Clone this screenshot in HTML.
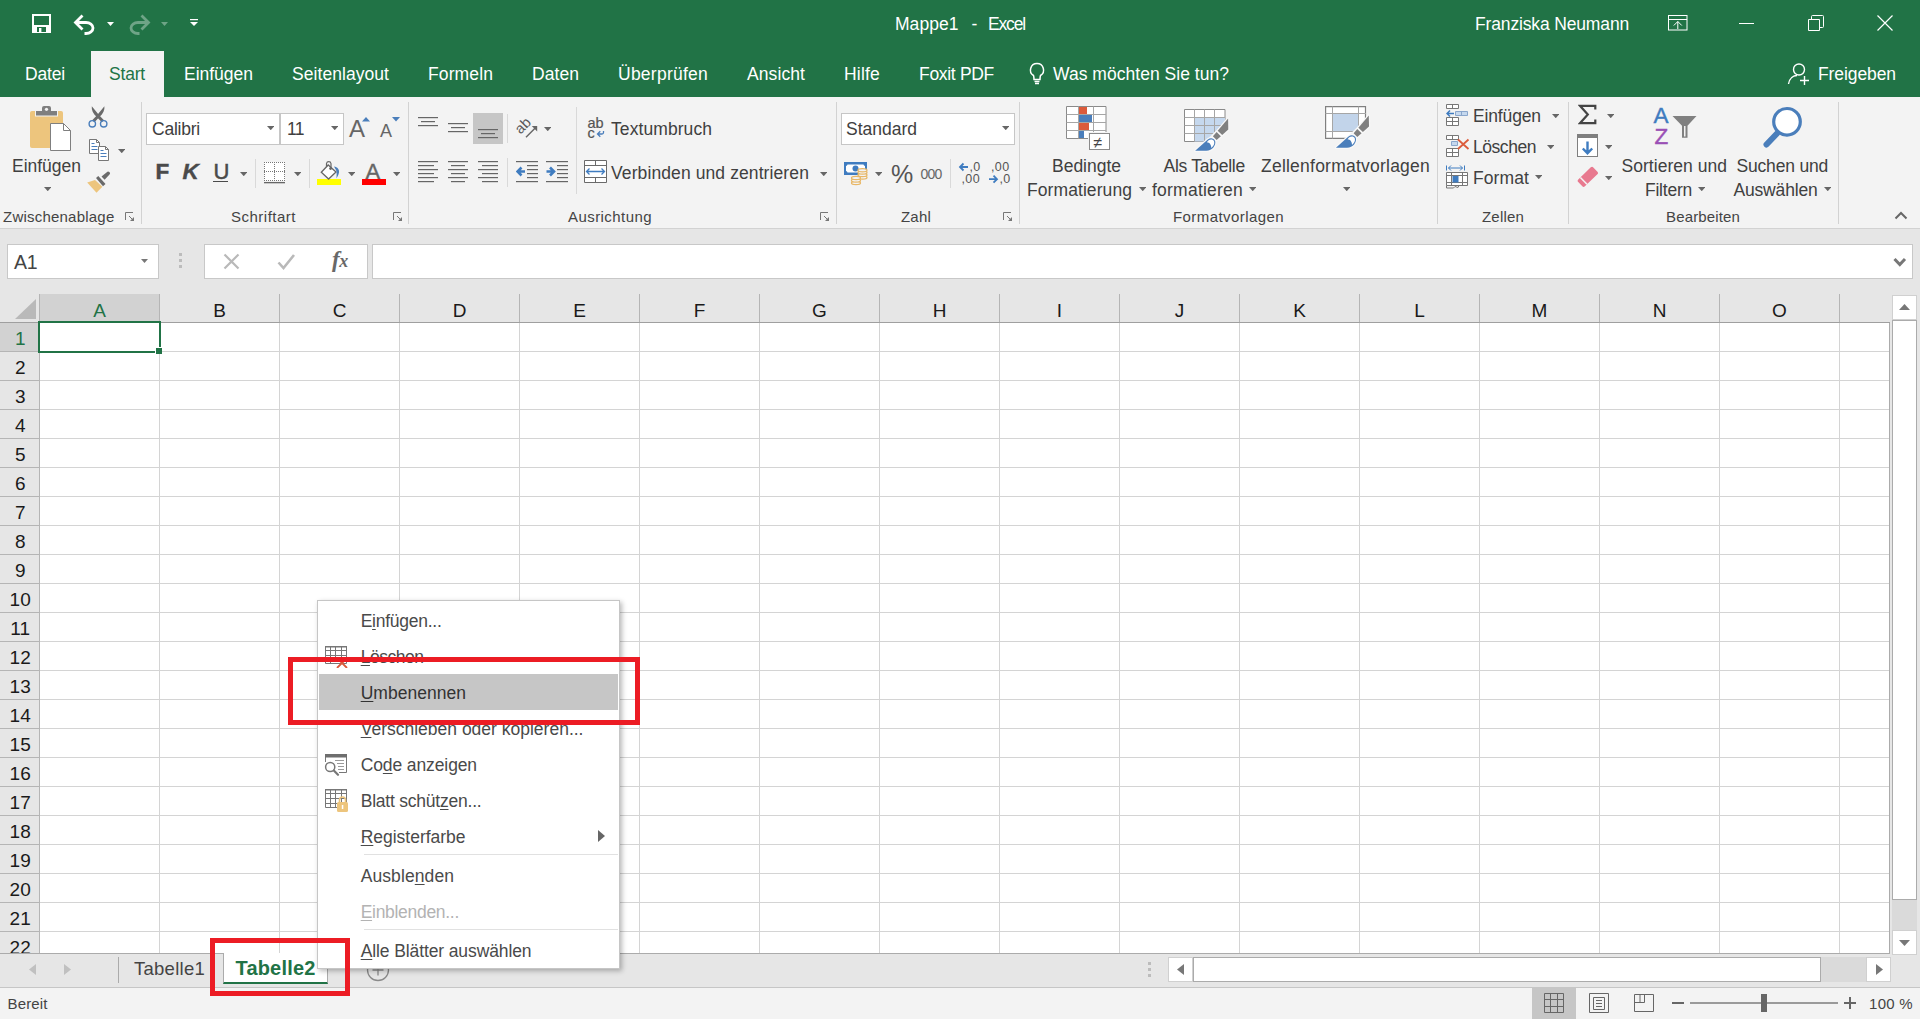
<!DOCTYPE html>
<html lang="de"><head><meta charset="utf-8"><title>Mappe1 - Excel</title>
<style>
*{box-sizing:border-box;margin:0;padding:0}
html,body{width:1920px;height:1019px;overflow:hidden;background:#e6e6e6;font-family:"Liberation Sans",sans-serif;}
.a{position:absolute;display:block}
.t{position:absolute;white-space:pre;}
#root{position:relative;width:1920px;height:1019px;overflow:hidden}
u{text-decoration:underline;text-underline-offset:1.5px;text-decoration-thickness:1px}
</style></head>
<body><div id="root">
<div class="a " style="left:0px;top:0px;width:1920px;height:97px;background:#217346;"></div>
<svg class="a" style="left:32px;top:14px;" width="19" height="19" viewBox="0 0 19 19"><path d="M1 1H18V18H1Z" fill="none" stroke="#fff" stroke-width="2"/><rect x="2" y="2" width="15" height="8" fill="none"/><path d="M2 11H17V17H2Z" fill="#fff"/><rect x="5" y="13" width="9" height="5" fill="#217346"/><rect x="7" y="14" width="2.4" height="4" fill="#fff"/></svg>
<svg class="a" style="left:73px;top:14px;" width="24" height="21" viewBox="0 0 24 21"><path d="M2.5 8.5H13A7 5.5 0 0 1 13 19.5H11.5" fill="none" stroke="#fff" stroke-width="2.800"/><path d="M9.5 1.5L2.5 8.5L9.5 15.5" fill="none" stroke="#fff" stroke-width="2.800"/></svg>
<svg class="a" style="left:107.0px;top:21.5px;" width="7" height="4" viewBox="0 0 7 4"><path d="M0 0H7L3.5 4Z" fill="#fff"/></svg>
<svg class="a" style="left:127px;top:14px;" width="24" height="21" viewBox="0 0 24 21"><g opacity="0.35"><path d="M21.5 8.5H11A7 5.5 0 0 0 11 19.5H12.5" fill="none" stroke="#fff" stroke-width="2.800"/><path d="M14.5 1.5L21.5 8.5L14.5 15.5" fill="none" stroke="#fff" stroke-width="2.800"/></g></svg>
<svg class="a" style="left:161.0px;top:21.5px;" width="7" height="4" viewBox="0 0 7 4"><path d="M0 0H7L3.5 4Z" fill="rgba(255,255,255,.35)"/></svg>
<svg class="a" style="left:190px;top:19px;" width="8" height="8" viewBox="0 0 8 8"><rect x="0" y="0" width="8" height="1.2" fill="#fff"/><path d="M0 3H8L4 7Z" fill="#fff"/></svg>
<div class="t " style="left:895px;top:11.9px;height:24px;line-height:24px;font-size:17.5px;color:#fff;letter-spacing:0.04px;">Mappe1</div>
<div class="t " style="left:971.5px;top:11.9px;height:24px;line-height:24px;font-size:17.5px;color:#fff;letter-spacing:-0.83px;">-</div>
<div class="t " style="left:988px;top:11.9px;height:24px;line-height:24px;font-size:17.5px;color:#fff;letter-spacing:-1.16px;">Excel</div>
<div class="t " style="left:1475px;top:11.9px;height:24px;line-height:24px;font-size:17.5px;color:#fff;letter-spacing:-0.15px;">Franziska Neumann</div>
<svg class="a" style="left:1668px;top:15px;" width="20" height="16" viewBox="0 0 20 16"><rect x="0.5" y="0.5" width="18.500" height="14.500" fill="none" stroke="#fff"/><path d="M0.5 4.5H19" stroke="#fff"/><path d="M9.800 14V6.500M5.800 10.500L9.800 6.500L13.800 10.500" fill="none" stroke="#fff"/></svg>
<div class="a " style="left:1739px;top:23px;width:15px;height:1px;background:#fff;"></div>
<svg class="a" style="left:1808px;top:15px;" width="16" height="16" viewBox="0 0 16 16"><path d="M0.5 4.5H11.500V15.500H0.5Z" fill="none" stroke="#fff"/><path d="M3.500 4.500V1.500A1 1 0 0 1 4.500 0.500H14.500A1 1 0 0 1 15.500 1.500V11.500A1 1 0 0 1 14.500 12.500H11.500" fill="none" stroke="#fff"/></svg>
<svg class="a" style="left:1877px;top:15px;" width="16" height="16" viewBox="0 0 16 16"><path d="M0.5 0.5L15.500 15.500M15.500 0.5L0.5 15.500" stroke="#fff" stroke-width="1.200"/></svg>
<div class="a " style="left:91px;top:51px;width:73px;height:46px;background:#f3f3f3;"></div>
<div class="t " style="left:25px;top:62.3px;height:24px;line-height:24px;font-size:17.5px;color:#fff;letter-spacing:-0.17px;">Datei</div>
<div class="t " style="left:109px;top:62.3px;height:24px;line-height:24px;font-size:17.5px;color:#217346;letter-spacing:-0.19px;">Start</div>
<div class="t " style="left:184px;top:62.3px;height:24px;line-height:24px;font-size:17.5px;color:#fff;letter-spacing:-0.01px;">Einfügen</div>
<div class="t " style="left:292px;top:62.3px;height:24px;line-height:24px;font-size:17.5px;color:#fff;letter-spacing:0.06px;">Seitenlayout</div>
<div class="t " style="left:428px;top:62.3px;height:24px;line-height:24px;font-size:17.5px;color:#fff;letter-spacing:0.12px;">Formeln</div>
<div class="t " style="left:532px;top:62.3px;height:24px;line-height:24px;font-size:17.5px;color:#fff;letter-spacing:0.06px;">Daten</div>
<div class="t " style="left:618px;top:62.3px;height:24px;line-height:24px;font-size:17.5px;color:#fff;letter-spacing:0.25px;">Überprüfen</div>
<div class="t " style="left:747px;top:62.3px;height:24px;line-height:24px;font-size:17.5px;color:#fff;letter-spacing:0.09px;">Ansicht</div>
<div class="t " style="left:844px;top:62.3px;height:24px;line-height:24px;font-size:17.5px;color:#fff;letter-spacing:0.20px;">Hilfe</div>
<div class="t " style="left:919px;top:62.3px;height:24px;line-height:24px;font-size:17.5px;color:#fff;letter-spacing:-0.31px;">Foxit PDF</div>
<div class="t " style="left:1053px;top:62.3px;height:24px;line-height:24px;font-size:17.5px;color:#fff;letter-spacing:0.03px;">Was möchten Sie tun?</div>
<div class="t " style="left:1818px;top:62.3px;height:24px;line-height:24px;font-size:17.5px;color:#fff;letter-spacing:-0.09px;">Freigeben</div>
<svg class="a" style="left:1028px;top:62px;" width="18" height="24" viewBox="0 0 18 24"><path d="M9 1.5A6.5 6.5 0 0 0 5.5 13.5C6 15 6 16 6 17.5H12C12 16 12 15 12.5 13.5A6.5 6.5 0 0 0 9 1.5Z" fill="none" stroke="#fff" stroke-width="1.5"/><path d="M6.5 19.5H11.5M7 21.5H11" stroke="#fff" stroke-width="1.3"/></svg>
<svg class="a" style="left:1787px;top:62px;" width="24" height="24" viewBox="0 0 24 24"><circle cx="12" cy="7.5" r="5.5" fill="none" stroke="#fff" stroke-width="1.4"/><path d="M1.5 22C2.5 16 6.5 13.5 10 13.5" fill="none" stroke="#fff" stroke-width="1.4"/><path d="M17.5 14V23M13 18.5H22" stroke="#fff" stroke-width="1.4"/></svg>
<div class="a " style="left:0px;top:97px;width:1920px;height:132px;background:#f3f3f3;border-bottom:1px solid #d2d2d2;"></div>
<div class="a " style="left:141px;top:102px;width:1px;height:122px;background:#d2d2d2;"></div>
<div class="a " style="left:408px;top:102px;width:1px;height:122px;background:#d2d2d2;"></div>
<div class="a " style="left:836px;top:102px;width:1px;height:122px;background:#d2d2d2;"></div>
<div class="a " style="left:1019px;top:102px;width:1px;height:122px;background:#d2d2d2;"></div>
<div class="a " style="left:1437px;top:102px;width:1px;height:122px;background:#d2d2d2;"></div>
<div class="a " style="left:1568px;top:102px;width:1px;height:122px;background:#d2d2d2;"></div>
<div class="a " style="left:1838px;top:102px;width:1px;height:122px;background:#d2d2d2;"></div>
<div class="t " style="left:3px;top:204.7px;height:24px;line-height:24px;font-size:15px;color:#444;letter-spacing:0.22px;">Zwischenablage</div>
<div class="t " style="left:231px;top:204.7px;height:24px;line-height:24px;font-size:15px;color:#444;letter-spacing:0.50px;">Schriftart</div>
<div class="t " style="left:568px;top:204.7px;height:24px;line-height:24px;font-size:15px;color:#444;letter-spacing:0.44px;">Ausrichtung</div>
<div class="t " style="left:901px;top:204.7px;height:24px;line-height:24px;font-size:15px;color:#444;letter-spacing:0.21px;">Zahl</div>
<div class="t " style="left:1173px;top:204.7px;height:24px;line-height:24px;font-size:15px;color:#444;letter-spacing:0.43px;">Formatvorlagen</div>
<div class="t " style="left:1482px;top:204.7px;height:24px;line-height:24px;font-size:15px;color:#444;letter-spacing:0.19px;">Zellen</div>
<div class="t " style="left:1666px;top:204.7px;height:24px;line-height:24px;font-size:15px;color:#444;letter-spacing:0.15px;">Bearbeiten</div>
<svg class="a" style="left:125px;top:212px;" width="10" height="10" viewBox="0 0 10 10"><path d="M0.500 8V0.500H8" fill="none" stroke="#777"/><path d="M4 4L8 8" fill="none" stroke="#777"/><path d="M9 5V9H5Z" fill="#777"/></svg>
<svg class="a" style="left:393px;top:212px;" width="10" height="10" viewBox="0 0 10 10"><path d="M0.500 8V0.500H8" fill="none" stroke="#777"/><path d="M4 4L8 8" fill="none" stroke="#777"/><path d="M9 5V9H5Z" fill="#777"/></svg>
<svg class="a" style="left:820px;top:212px;" width="10" height="10" viewBox="0 0 10 10"><path d="M0.500 8V0.500H8" fill="none" stroke="#777"/><path d="M4 4L8 8" fill="none" stroke="#777"/><path d="M9 5V9H5Z" fill="#777"/></svg>
<svg class="a" style="left:1003px;top:212px;" width="10" height="10" viewBox="0 0 10 10"><path d="M0.500 8V0.500H8" fill="none" stroke="#777"/><path d="M4 4L8 8" fill="none" stroke="#777"/><path d="M9 5V9H5Z" fill="#777"/></svg>
<svg class="a" style="left:1894px;top:211px;" width="14" height="9" viewBox="0 0 14 9"><path d="M1.500 7.500L7 2L12.500 7.500" fill="none" stroke="#666" stroke-width="2"/></svg>
<svg class="a" style="left:29px;top:105px;" width="44" height="47" viewBox="0 0 44 47"><rect x="1" y="6" width="33" height="37" rx="2" fill="#edc57d"/>
<path d="M6 5H12V0.5H23V5H29V11.500H6Z" fill="#f3f3f3"/>
<path d="M7 6H13V3A2 2 0 0 1 15 1H20A2 2 0 0 1 22 3V6H28V10.500H7Z" fill="#7f7f7f"/><circle cx="17.500" cy="4.300" r="1.600" fill="#f3f3f3"/>
<path d="M21.500 18.500H34.500L41.500 25.500V45.500H21.500Z" fill="#fff" stroke="#7f7f7f"/><path d="M34.500 18.500V25.500H41.500" fill="none" stroke="#7f7f7f"/></svg>
<div class="t " style="left:12px;top:153.7px;height:24px;line-height:24px;font-size:17.5px;color:#404040;letter-spacing:-0.01px;">Einfügen</div>
<svg class="a" style="left:43.75px;top:186.9px;" width="7.5" height="4.2" viewBox="0 0 7.5 4.2"><path d="M0 0H7.5L3.75 4.2Z" fill="#666"/></svg>
<svg class="a" style="left:87px;top:105px;" width="23" height="24" viewBox="0 0 23 24"><path d="M4.800 1.200L8.500 5.800L12.200 10.300L17 15.200L14.800 17.200L9.800 12C6 8.500 4.300 5 4.800 1.200Z" fill="#6a6a6a"/><path d="M17.400 1.200L13.700 5.800L10 10.300L5.200 15.200L7.400 17.200L12.400 12C16.200 8.500 17.900 5 17.400 1.200Z" fill="#6a6a6a"/>
<circle cx="5.300" cy="18.800" r="3.200" fill="none" stroke="#4a7ebb" stroke-width="1.400"/><circle cx="16.700" cy="18.800" r="3.200" fill="none" stroke="#4a7ebb" stroke-width="1.400"/></svg>
<svg class="a" style="left:88px;top:138px;" width="23" height="24" viewBox="0 0 23 24"><path d="M1.500 1.500H8.500L11.500 4.500V15.500H1.500Z" fill="#fff" stroke="#777"/><path d="M8.500 1.500V4.500H11.500" fill="none" stroke="#777"/><path d="M3.500 5.500H6.500M3.500 8.500H9.500M3.500 11.500H9.500" stroke="#4a7ebb"/>
<path d="M10.500 8.500H17.500L20.500 11.500V22.500H10.500Z" fill="#fff" stroke="#777"/><path d="M17.500 8.500V11.500H20.500" fill="none" stroke="#777"/><path d="M12.500 12.500H15.500M12.500 15.500H18.500M12.500 18.500H18.500" stroke="#4a7ebb"/></svg>
<svg class="a" style="left:117.75px;top:148.9px;" width="7.5" height="4.2" viewBox="0 0 7.5 4.2"><path d="M0 0H7.5L3.75 4.2Z" fill="#666"/></svg>
<svg class="a" style="left:86px;top:171px;" width="26" height="24" viewBox="0 0 26 24"><path d="M1.200 11.400L9 9L16.400 15.800L10.500 21.700Z" fill="#edc57d"/><path d="M10 7L12.300 5L19.500 13L17 15.300Z" fill="#6a6a6a"/><path d="M15.500 5.500L20.800 1.200A1.800 1.800 0 0 1 23.500 3.600L18.600 8.800Z" fill="#6a6a6a"/></svg>
<div class="a " style="left:146px;top:113px;width:134px;height:32px;background:#fff;border:1px solid #c6c6c6;"></div>
<div class="a " style="left:280px;top:113px;width:64px;height:32px;background:#fff;border:1px solid #c6c6c6;"></div>
<div class="t " style="left:152px;top:116.7px;height:24px;line-height:24px;font-size:17.5px;color:#404040;letter-spacing:-0.23px;">Calibri</div>
<div class="t " style="left:287px;top:116.7px;height:24px;line-height:24px;font-size:17.5px;color:#404040;letter-spacing:-0.58px;">11</div>
<svg class="a" style="left:266.75px;top:125.9px;" width="7.5" height="4.2" viewBox="0 0 7.5 4.2"><path d="M0 0H7.5L3.75 4.2Z" fill="#666"/></svg>
<svg class="a" style="left:330.75px;top:125.9px;" width="7.5" height="4.2" viewBox="0 0 7.5 4.2"><path d="M0 0H7.5L3.75 4.2Z" fill="#666"/></svg>
<div class="t " style="left:349px;top:116.7px;height:24px;line-height:24px;font-size:24px;color:#666;">A</div>
<svg class="a" style="left:362px;top:117px;" width="8" height="5" viewBox="0 0 8 5"><path d="M0 4.500L4 0L8 4.500Z" fill="#4a7ebb"/></svg>
<div class="t " style="left:380px;top:119.2px;height:24px;line-height:24px;font-size:18px;color:#666;letter-spacing:0.99px;">A</div>
<svg class="a" style="left:392px;top:117px;" width="8" height="5" viewBox="0 0 8 5"><path d="M0 0H8L4 4.500Z" fill="#4a7ebb"/></svg>
<div class="t " style="left:155.5px;top:159.9px;height:24px;line-height:24px;font-size:22.5px;color:#4a4a4a;letter-spacing:-2.24px;font-weight:bold;-webkit-text-stroke:0.5px #4a4a4a;">F</div>
<div class="t " style="left:182.5px;top:159.9px;height:24px;line-height:24px;font-size:22.5px;color:#4a4a4a;letter-spacing:0.75px;font-weight:bold;font-style:italic;-webkit-text-stroke:0.4px #4a4a4a;">K</div>
<div class="t " style="left:213.5px;top:159.9px;height:24px;line-height:24px;font-size:22px;color:#4a4a4a;letter-spacing:-1.39px;-webkit-text-stroke:0.5px #4a4a4a;">U</div>
<div class="a " style="left:213px;top:181px;width:15px;height:1px;background:#4a4a4a;"></div>
<svg class="a" style="left:239.75px;top:171.9px;" width="7.5" height="4.2" viewBox="0 0 7.5 4.2"><path d="M0 0H7.5L3.75 4.2Z" fill="#666"/></svg>
<div class="a " style="left:255px;top:159px;width:1px;height:29px;background:#d9d9d9;"></div>
<svg class="a" style="left:263px;top:161px;" width="23" height="23" viewBox="0 0 23 23"><rect x="1" y="1" width="21" height="20" fill="#fff"/><path d="M1.500 1V21M11.500 1V21M21.500 1V21M1 1.500H22M1 10.500H22M1 19.500H22" stroke="#777" stroke-dasharray="1 1" fill="none"/><path d="M1 21.600H22" stroke="#666" stroke-width="1.400"/></svg>
<svg class="a" style="left:293.75px;top:171.9px;" width="7.5" height="4.2" viewBox="0 0 7.5 4.2"><path d="M0 0H7.5L3.75 4.2Z" fill="#666"/></svg>
<div class="a " style="left:309px;top:159px;width:1px;height:29px;background:#d9d9d9;"></div>
<svg class="a" style="left:317px;top:160px;" width="25" height="26" viewBox="0 0 25 26"><rect x="0" y="19" width="24" height="6" fill="#ffff00"/>
<path d="M4.300 12.300L11.200 5L19 12L11.600 19Z" fill="#fff" stroke="#666" stroke-width="1.300"/><path d="M9.500 7V3.500A2.300 2.300 0 0 1 14 3.500V8" fill="none" stroke="#666" stroke-width="1.200"/><circle cx="13.600" cy="8.600" r="1.400" fill="#666"/>
<path d="M17 6.500C20.500 7 22.500 9.500 22 12.500C21.500 15 20.500 16.500 19.500 18.500C19.500 15 20 12 19 10Z" fill="#4a7ebb"/></svg>
<svg class="a" style="left:347.75px;top:171.9px;" width="7.5" height="4.2" viewBox="0 0 7.5 4.2"><path d="M0 0H7.5L3.75 4.2Z" fill="#666"/></svg>
<div class="t " style="left:365.5px;top:160.0px;height:24px;line-height:24px;font-size:22px;color:#666;letter-spacing:1.33px;-webkit-text-stroke:0.4px #666;">A</div>
<div class="a " style="left:362px;top:179px;width:24px;height:6px;background:#ff0000;"></div>
<svg class="a" style="left:392.75px;top:171.9px;" width="7.5" height="4.2" viewBox="0 0 7.5 4.2"><path d="M0 0H7.5L3.75 4.2Z" fill="#666"/></svg>
<div class="a " style="left:473px;top:113px;width:30px;height:31px;background:#c6c6c6;"></div>
<svg class="a" style="left:418px;top:113px;" width="22" height="26" viewBox="0 0 22 26"><rect x="0" y="4" width="20" height="1.200" fill="#666"/><rect x="3" y="8" width="14" height="1.200" fill="#666"/><rect x="0" y="12" width="20" height="1.200" fill="#666"/></svg>
<svg class="a" style="left:448px;top:113px;" width="22" height="26" viewBox="0 0 22 26"><rect x="0" y="10" width="20" height="1.200" fill="#666"/><rect x="3" y="14" width="14" height="1.200" fill="#666"/><rect x="0" y="18" width="20" height="1.200" fill="#666"/></svg>
<svg class="a" style="left:478px;top:113px;" width="22" height="26" viewBox="0 0 22 26"><rect x="0" y="16" width="20" height="1.200" fill="#666"/><rect x="3" y="20" width="14" height="1.200" fill="#666"/><rect x="0" y="24" width="20" height="1.200" fill="#666"/></svg>
<div class="a " style="left:507px;top:114px;width:1px;height:29px;background:#d9d9d9;"></div>
<svg class="a" style="left:516px;top:116px;" width="24" height="24" viewBox="0 0 24 24"><text x="0" y="0" font-size="14.500" fill="#5a5a5a" transform="translate(4.600 18.800) rotate(-45)" font-family="Liberation Sans, sans-serif">ab</text><path d="M10 21.200L19.500 11.700" fill="none" stroke="#666" stroke-width="1.400"/><path d="M15.800 10H21.200V15.400Z" fill="#666"/></svg>
<svg class="a" style="left:543.75px;top:126.6px;" width="7.5" height="4.2" viewBox="0 0 7.5 4.2"><path d="M0 0H7.5L3.75 4.2Z" fill="#666"/></svg>
<div class="a " style="left:576px;top:107px;width:1px;height:87px;background:#d9d9d9;"></div>
<svg class="a" style="left:586px;top:115px;" width="22" height="26" viewBox="0 0 22 26"><text x="1.500" y="13.200" font-size="14.500" fill="#555" stroke="#555" stroke-width="0.200" font-family="Liberation Sans, sans-serif">ab</text><text x="1.500" y="23.300" font-size="14.500" fill="#555" stroke="#555" stroke-width="0.200" font-family="Liberation Sans, sans-serif">c</text><path d="M17.500 16V17.500A1.500 1.500 0 0 1 16 19H12M14.300 16.300L11.500 19L14.300 21.700" fill="none" stroke="#4a7ebb" stroke-width="1.300"/></svg>
<div class="t " style="left:611px;top:116.7px;height:24px;line-height:24px;font-size:17.5px;color:#404040;letter-spacing:0.08px;">Textumbruch</div>
<svg class="a" style="left:418px;top:160px;" width="22" height="26" viewBox="0 0 22 26"><rect x="0" y="1" width="20" height="1.200" fill="#666"/><rect x="0" y="5" width="16" height="1.200" fill="#666"/><rect x="0" y="9" width="20" height="1.200" fill="#666"/><rect x="0" y="13" width="16" height="1.200" fill="#666"/><rect x="0" y="17" width="20" height="1.200" fill="#666"/><rect x="0" y="21" width="16" height="1.200" fill="#666"/></svg>
<svg class="a" style="left:448px;top:160px;" width="22" height="26" viewBox="0 0 22 26"><rect x="0" y="1" width="20" height="1.200" fill="#666"/><rect x="3" y="5" width="14" height="1.200" fill="#666"/><rect x="0" y="9" width="20" height="1.200" fill="#666"/><rect x="3" y="13" width="14" height="1.200" fill="#666"/><rect x="0" y="17" width="20" height="1.200" fill="#666"/><rect x="3" y="21" width="14" height="1.200" fill="#666"/></svg>
<svg class="a" style="left:478px;top:160px;" width="22" height="26" viewBox="0 0 22 26"><rect x="0" y="1" width="20" height="1.200" fill="#666"/><rect x="4" y="5" width="16" height="1.200" fill="#666"/><rect x="0" y="9" width="20" height="1.200" fill="#666"/><rect x="4" y="13" width="16" height="1.200" fill="#666"/><rect x="0" y="17" width="20" height="1.200" fill="#666"/><rect x="4" y="21" width="16" height="1.200" fill="#666"/></svg>
<div class="a " style="left:507px;top:158px;width:1px;height:29px;background:#d9d9d9;"></div>
<svg class="a" style="left:516px;top:160px;" width="23" height="24" viewBox="0 0 23 24"><rect x="0" y="1" width="22" height="1.200" fill="#666"/><rect x="11" y="5" width="11" height="1.200" fill="#666"/><rect x="11" y="9" width="11" height="1.200" fill="#666"/><rect x="11" y="13" width="11" height="1.200" fill="#666"/><rect x="11" y="17" width="11" height="1.200" fill="#666"/><rect x="0" y="21" width="22" height="1.200" fill="#666"/><path d="M9 11.500H2.500M5.500 7.500L1.500 11.500L5.500 15.500" fill="none" stroke="#3f7cc0" stroke-width="2.600"/></svg>
<svg class="a" style="left:546px;top:160px;" width="23" height="24" viewBox="0 0 23 24"><rect x="0" y="1" width="22" height="1.200" fill="#666"/><rect x="11" y="5" width="11" height="1.200" fill="#666"/><rect x="11" y="9" width="11" height="1.200" fill="#666"/><rect x="11" y="13" width="11" height="1.200" fill="#666"/><rect x="11" y="17" width="11" height="1.200" fill="#666"/><rect x="0" y="21" width="22" height="1.200" fill="#666"/><path d="M0.500 11.500H7M4 7.500L8 11.500L4 15.500" fill="none" stroke="#3f7cc0" stroke-width="2.600"/></svg>
<svg class="a" style="left:584px;top:160px;" width="24" height="24" viewBox="0 0 24 24"><path d="M0.500 0.500H22.500V22.500H0.500Z" fill="#fff" stroke="#6a6a6a"/><path d="M0.500 5.500H22.500M0.500 17.500H22.500M11.500 0.500V5.500M11.500 17.500V22.500" fill="none" stroke="#6a6a6a"/><path d="M3 11.500H20M5.500 8.500L2.500 11.500L5.500 14.500M17.500 8.500L20.500 11.500L17.500 14.500" fill="none" stroke="#3f7cc0" stroke-width="1.300"/></svg>
<div class="t " style="left:611px;top:160.7px;height:24px;line-height:24px;font-size:17.5px;color:#404040;letter-spacing:0.10px;">Verbinden und zentrieren</div>
<svg class="a" style="left:819.75px;top:171.9px;" width="7.5" height="4.2" viewBox="0 0 7.5 4.2"><path d="M0 0H7.5L3.75 4.2Z" fill="#666"/></svg>
<div class="a " style="left:841px;top:113px;width:174px;height:32px;background:#fff;border:1px solid #c6c6c6;"></div>
<div class="t " style="left:846px;top:116.7px;height:24px;line-height:24px;font-size:17.5px;color:#404040;">Standard</div>
<svg class="a" style="left:1001.75px;top:125.9px;" width="7.5" height="4.2" viewBox="0 0 7.5 4.2"><path d="M0 0H7.5L3.75 4.2Z" fill="#666"/></svg>
<svg class="a" style="left:843px;top:161px;" width="26" height="25" viewBox="0 0 26 25"><rect x="1" y="1" width="23" height="13" fill="#3f7cc0"/><path d="M4.500 3.500H20.500A2 2 0 0 0 22 5V10A2 2 0 0 0 20.500 11.500H4.500A2 2 0 0 0 3 10V5A2 2 0 0 0 4.500 3.500Z" fill="#fff"/><circle cx="12.500" cy="7.500" r="3" fill="#3f7cc0"/>
<g fill="#f3f3f3" stroke="#e8b766" stroke-width="1.300"><ellipse cx="19.500" cy="16.500" rx="4.500" ry="1.600"/><ellipse cx="19.500" cy="14" rx="4.500" ry="1.600"/><ellipse cx="19.500" cy="11.500" rx="4.500" ry="1.600"/><ellipse cx="19.500" cy="9.300" rx="4.500" ry="1.600"/><ellipse cx="13" cy="22" rx="4.500" ry="1.600"/><ellipse cx="13" cy="19.500" rx="4.500" ry="1.600"/><ellipse cx="13" cy="17" rx="4.500" ry="1.600"/></g></svg>
<svg class="a" style="left:874.75px;top:171.6px;" width="7.5" height="4.2" viewBox="0 0 7.5 4.2"><path d="M0 0H7.5L3.75 4.2Z" fill="#666"/></svg>
<div class="t " style="left:891px;top:161.7px;height:24px;line-height:24px;font-size:25px;color:#555;letter-spacing:-2.23px;">%</div>
<div class="t " style="left:920.5px;top:161.7px;height:24px;line-height:24px;font-size:14px;color:#666;letter-spacing:-0.79px;">000</div>
<div class="a " style="left:950px;top:159px;width:1px;height:29px;background:#d9d9d9;"></div>
<svg class="a" style="left:957px;top:160px;" width="26" height="27" viewBox="0 0 26 27"><text x="12.500" y="11" font-size="12.500" fill="#555" font-family="Liberation Sans, sans-serif" letter-spacing="0.2">,0</text><text x="4.500" y="22.500" font-size="12.500" fill="#555" font-family="Liberation Sans, sans-serif" letter-spacing="0.4">,00</text><path d="M11 7H3.500M6.500 3.500L3 7L6.500 10.500" fill="none" stroke="#3f7cc0" stroke-width="1.800"/></svg>
<svg class="a" style="left:987px;top:160px;" width="26" height="27" viewBox="0 0 26 27"><text x="4" y="11" font-size="12.500" fill="#555" font-family="Liberation Sans, sans-serif" letter-spacing="0.4">,00</text><text x="12.500" y="22.500" font-size="12.500" fill="#555" font-family="Liberation Sans, sans-serif" letter-spacing="0.2">,0</text><path d="M2 19.200H9.500M6.500 15.700L10 19.200L6.500 22.700" fill="none" stroke="#3f7cc0" stroke-width="1.800"/></svg>
<svg class="a" style="left:1066px;top:106px;" width="46" height="46" viewBox="0 0 46 46"><path d="M0.500 0.500H40V32.500H0.500Z" fill="#fff" stroke="#8a8a8a"/><path d="M0.500 8.500H40M0.500 16.500H40M0.500 24.500H40M12.500 0.500V32.500M27.500 0.500V32.500" stroke="#a6a6a6" fill="none"/>
<rect x="13" y="1" width="8" height="7" fill="#dc5b3b"/><rect x="13" y="9" width="13" height="7" fill="#4a7ebb"/><rect x="13" y="17" width="10" height="7" fill="#dc5b3b"/><rect x="13" y="25" width="5" height="7" fill="#4a7ebb"/>
<rect x="22" y="26" width="23" height="19" fill="#f3f3f3"/><rect x="23.500" y="27.500" width="20" height="16" fill="#fff" stroke="#8a8a8a"/><text x="27.500" y="41.500" font-size="16" fill="#444" font-family="Liberation Sans, sans-serif">≠</text></svg>
<div class="t " style="left:1052px;top:153.7px;height:24px;line-height:24px;font-size:17.5px;color:#404040;letter-spacing:-0.01px;">Bedingte</div>
<div class="t " style="left:1027px;top:177.7px;height:24px;line-height:24px;font-size:17.5px;color:#404040;letter-spacing:0.08px;">Formatierung</div>
<svg class="a" style="left:1138.75px;top:186.9px;" width="7.5" height="4.2" viewBox="0 0 7.5 4.2"><path d="M0 0H7.5L3.75 4.2Z" fill="#666"/></svg>
<svg class="a" style="left:1184px;top:106px;" width="48" height="48" viewBox="0 0 48 48"><path d="M0.500 3.500H41V35.500H0.500Z" fill="#fff" stroke="#8a8a8a"/><rect x="10.500" y="11.500" width="30.500" height="24" fill="#c5d8ee"/><path d="M0.500 11.500H41M0.500 19.500H41M0.500 27.500H41M10.500 3.500V35.500M20.500 3.500V35.500M30.500 3.500V35.500" stroke="#a6a6a6" fill="none"/><g transform="translate(0.300 3)"><path d="M46 7.500V45H8Z" fill="#f3f3f3"/><g stroke="#f8f8f8" stroke-width="2.400" stroke-linejoin="round" fill="#f8f8f8"><path d="M43.800 9.600L44 20.500L37.900 26L33.400 21.800Z"/><path d="M32.300 23.100L36.600 27.300L32.300 31L28.600 27.300Z"/><path d="M10.900 41.800L23.500 30.500C26 28.300 29.500 28.800 30.800 32C32 36 28 41.800 22 41.800Z"/></g>
<path d="M43.800 9.600L44 20.500L37.900 26L33.400 21.800Z" fill="#808080"/><path d="M32.300 23.100L36.600 27.300L32.300 31L28.600 27.300Z" fill="#808080"/>
<path d="M10.900 41.800L23.500 30.500C26 28.300 29.500 28.800 30.800 32C32 36 28 41.800 22 41.800Z" fill="#4a7ebb"/><path d="M24 31.500C26 29.800 28.800 30 29.800 32.300C30.600 34.800 29 37.500 27 39C27 36 25.500 33.500 22.500 33.300Z" fill="#fff"/></g></svg>
<div class="t " style="left:1163.5px;top:153.7px;height:24px;line-height:24px;font-size:17.5px;color:#404040;letter-spacing:-0.26px;">Als Tabelle</div>
<div class="t " style="left:1152px;top:177.7px;height:24px;line-height:24px;font-size:17.5px;color:#404040;letter-spacing:0.23px;">formatieren</div>
<svg class="a" style="left:1248.75px;top:186.9px;" width="7.5" height="4.2" viewBox="0 0 7.5 4.2"><path d="M0 0H7.5L3.75 4.2Z" fill="#666"/></svg>
<svg class="a" style="left:1325px;top:106px;" width="48" height="48" viewBox="0 0 48 48"><path d="M0.600 0.600H40.500V32.400H0.600Z" fill="#fff" stroke="#808080" stroke-width="1.200"/><path d="M0.500 7.500H41M0.500 25.500H41M7.500 0.500V32.500M33.500 0.500V32.500" stroke="#a6a6a6" fill="none"/><rect x="8" y="8" width="25" height="17" fill="#c2d4ea"/><g><path d="M46 7.500V45H8Z" fill="#f3f3f3"/><g stroke="#f8f8f8" stroke-width="2.400" stroke-linejoin="round" fill="#f8f8f8"><path d="M43.800 9.600L44 20.500L37.900 26L33.400 21.800Z"/><path d="M32.300 23.100L36.600 27.300L32.300 31L28.600 27.300Z"/><path d="M10.900 41.800L23.500 30.500C26 28.300 29.500 28.800 30.800 32C32 36 28 41.800 22 41.800Z"/></g>
<path d="M43.800 9.600L44 20.500L37.900 26L33.400 21.800Z" fill="#808080"/><path d="M32.300 23.100L36.600 27.300L32.300 31L28.600 27.300Z" fill="#808080"/>
<path d="M10.900 41.800L23.500 30.500C26 28.300 29.500 28.800 30.800 32C32 36 28 41.800 22 41.800Z" fill="#4a7ebb"/><path d="M24 31.500C26 29.800 28.800 30 29.800 32.300C30.600 34.800 29 37.500 27 39C27 36 25.500 33.500 22.500 33.300Z" fill="#fff"/></g></svg>
<div class="t " style="left:1261px;top:153.7px;height:24px;line-height:24px;font-size:17.5px;color:#404040;letter-spacing:0.23px;">Zellenformatvorlagen</div>
<svg class="a" style="left:1342.75px;top:186.6px;" width="7.5" height="4.2" viewBox="0 0 7.5 4.2"><path d="M0 0H7.5L3.75 4.2Z" fill="#666"/></svg>
<svg class="a" style="left:1446px;top:104px;" width="23" height="23" viewBox="0 0 23 23"><path d="M0.500 0.500H12.500V4.500H0.500ZM6.500 0.500V4.500" fill="#fff" stroke="#777"/><path d="M0.500 13.500H12.500V21.500H0.500ZM6.500 13.500V21.500M0.500 17.500H12.500" fill="#fff" stroke="#777"/><path d="M9.500 7.500H21.500V11.500H9.500ZM15.500 7.500V11.500" fill="#c5d8ee" stroke="#8aa6cc"/><path d="M8 9.500H1.500M4 6.500L1 9.500L4 12.500" fill="none" stroke="#3f7cc0" stroke-width="1.500"/></svg>
<div class="t " style="left:1473px;top:103.7px;height:24px;line-height:24px;font-size:17.5px;color:#404040;letter-spacing:-0.14px;">Einfügen</div>
<svg class="a" style="left:1551.75px;top:113.7px;" width="7.5" height="4.2" viewBox="0 0 7.5 4.2"><path d="M0 0H7.5L3.75 4.2Z" fill="#666"/></svg>
<svg class="a" style="left:1446px;top:135px;" width="24" height="23" viewBox="0 0 24 23"><path d="M0.500 0.500H12.500V4.500H0.500ZM6.500 0.500V4.500" fill="#fff" stroke="#777"/><path d="M0.500 13.500H12.500V21.500H0.500ZM6.500 13.500V21.500M0.500 17.500H12.500" fill="#fff" stroke="#777"/><path d="M5.500 6.500H11.500V10.500H5.500Z" fill="#c5d8ee" stroke="#8aa6cc"/><path d="M12 4.500L22.500 14M22.500 4.500L12 14" stroke="#dc5b3b" stroke-width="1.800"/></svg>
<div class="t " style="left:1473px;top:134.7px;height:24px;line-height:24px;font-size:17.5px;color:#404040;letter-spacing:-0.45px;">Löschen</div>
<svg class="a" style="left:1546.75px;top:144.5px;" width="7.5" height="4.2" viewBox="0 0 7.5 4.2"><path d="M0 0H7.5L3.75 4.2Z" fill="#666"/></svg>
<svg class="a" style="left:1446px;top:165px;" width="23" height="24" viewBox="0 0 23 24"><path d="M0.500 0.500V5.500M18.500 0.500V5.500M2.500 3H16.500M5 0.500L2.500 3L5 5.500M14 0.500L16.500 3L14 5.500" fill="none" stroke="#3f7cc0"/><path d="M0.500 7.500H21.500V20.500H0.500ZM0.500 10.500H21.500M0.500 17.500H21.500M5.500 7.500V20.500M16.500 7.500V20.500" fill="#fff" stroke="#777"/><rect x="6.500" y="11" width="6" height="6.500" fill="#3f7cc0"/><path d="M0.500 20.500V23L7.500 23L9 21.500L12 22.500L13 20.500" fill="none" stroke="#777"/></svg>
<div class="t " style="left:1473px;top:165.7px;height:24px;line-height:24px;font-size:17.5px;color:#404040;letter-spacing:0.10px;">Format</div>
<svg class="a" style="left:1534.75px;top:174.70000000000002px;" width="7.5" height="4.2" viewBox="0 0 7.5 4.2"><path d="M0 0H7.5L3.75 4.2Z" fill="#666"/></svg>
<svg class="a" style="left:1578px;top:104px;" width="20" height="21" viewBox="0 0 20 21"><path d="M17.300 5.500V1.800H2L9.800 10.500L2 19.200H17.300V15.500" fill="none" stroke="#444" stroke-width="2.200" stroke-linejoin="miter"/></svg>
<svg class="a" style="left:1606.75px;top:113.7px;" width="7.5" height="4.2" viewBox="0 0 7.5 4.2"><path d="M0 0H7.5L3.75 4.2Z" fill="#666"/></svg>
<svg class="a" style="left:1576px;top:134px;" width="23" height="24" viewBox="0 0 23 24"><rect x="1.500" y="0.500" width="20" height="22" fill="#fff" stroke="#7f7f7f"/><rect x="1" y="0" width="21" height="4" fill="#7f7f7f"/><path d="M11.500 7.500V19M6.800 14.500L11.500 19.200L16.200 14.500" fill="none" stroke="#3f7cc0" stroke-width="2.400"/></svg>
<svg class="a" style="left:1604.75px;top:144.8px;" width="7.5" height="4.2" viewBox="0 0 7.5 4.2"><path d="M0 0H7.5L3.75 4.2Z" fill="#666"/></svg>
<svg class="a" style="left:1577px;top:165px;" width="23" height="24" viewBox="0 0 23 24"><g transform="rotate(-44 11 12)"><rect x="0.500" y="7" width="21" height="9.500" rx="1.800" fill="#e8798f"/><rect x="4.500" y="7" width="1.500" height="9.500" fill="#f3f3f3"/></g></svg>
<svg class="a" style="left:1604.75px;top:175.70000000000002px;" width="7.5" height="4.2" viewBox="0 0 7.5 4.2"><path d="M0 0H7.5L3.75 4.2Z" fill="#666"/></svg>
<svg class="a" style="left:1653px;top:102px;" width="46" height="46" viewBox="0 0 46 46"><text x="0.500" y="20.500" font-size="22.500" fill="#3f7cc0" font-family="Liberation Sans, sans-serif" stroke="#3f7cc0" stroke-width="0.400">A</text><text x="1.500" y="42" font-size="22.500" fill="#9a4fb5" font-family="Liberation Sans, sans-serif" stroke="#9a4fb5" stroke-width="0.400">Z</text><path d="M19.500 14H43.500L34.500 23.800V35.700H29V23.800Z" fill="#808080"/><rect x="31" y="24" width="1.500" height="10.500" fill="#f3f3f3"/></svg>
<div class="t " style="left:1621.5px;top:153.7px;height:24px;line-height:24px;font-size:17.5px;color:#404040;letter-spacing:0.03px;">Sortieren und</div>
<div class="t " style="left:1645px;top:177.7px;height:24px;line-height:24px;font-size:17.5px;color:#404040;letter-spacing:-0.23px;">Filtern</div>
<svg class="a" style="left:1697.85px;top:186.9px;" width="7.5" height="4.2" viewBox="0 0 7.5 4.2"><path d="M0 0H7.5L3.75 4.2Z" fill="#666"/></svg>
<svg class="a" style="left:1760px;top:104px;" width="46" height="46" viewBox="0 0 46 46"><path d="M17 29.500L6.500 40.500" stroke="#4a7ebb" stroke-width="6" stroke-linecap="round"/><circle cx="27" cy="17.800" r="13.300" fill="#fff" stroke="#4a7ebb" stroke-width="3.200"/></svg>
<div class="t " style="left:1736.5px;top:153.7px;height:24px;line-height:24px;font-size:17.5px;color:#404040;letter-spacing:-0.19px;">Suchen und</div>
<div class="t " style="left:1733.5px;top:177.7px;height:24px;line-height:24px;font-size:17.5px;color:#404040;letter-spacing:-0.18px;">Auswählen</div>
<svg class="a" style="left:1823.75px;top:186.9px;" width="7.5" height="4.2" viewBox="0 0 7.5 4.2"><path d="M0 0H7.5L3.75 4.2Z" fill="#666"/></svg>
<div class="a " style="left:7px;top:244px;width:152px;height:35px;background:#fff;border:1px solid #c8c8c8;"></div>
<div class="t " style="left:14px;top:250.0px;height:24px;line-height:24px;font-size:19.5px;color:#444;letter-spacing:-0.18px;">A1</div>
<svg class="a" style="left:140.5px;top:259.0px;" width="7" height="4" viewBox="0 0 7 4"><path d="M0 0H7L3.5 4Z" fill="#777"/></svg>
<div class="a " style="left:179px;top:253px;width:3px;height:3px;background:#bcbcbc;"></div>
<div class="a " style="left:179px;top:259px;width:3px;height:3px;background:#bcbcbc;"></div>
<div class="a " style="left:179px;top:265px;width:3px;height:3px;background:#bcbcbc;"></div>
<div class="a " style="left:204px;top:244px;width:164px;height:35px;background:#fff;border:1px solid #c8c8c8;"></div>
<svg class="a" style="left:223px;top:253px;" width="17" height="17" viewBox="0 0 17 17"><path d="M1.500 1.500L15.500 15.500M15.500 1.500L1.500 15.500" stroke="#b9b9b9" stroke-width="2.2"/></svg>
<svg class="a" style="left:277px;top:253px;" width="19" height="17" viewBox="0 0 19 17"><path d="M1.500 9.500L6.500 15L17 2" fill="none" stroke="#b9b9b9" stroke-width="2.600"/></svg>
<div class="t" style="left:332px;top:246px;height:28px;line-height:28px;font-size:23px;color:#686868;font-family:'Liberation Serif',serif;font-style:italic;font-weight:bold;letter-spacing:-0.5px;">f<span style="font-size:18px">x</span></div>
<div class="a " style="left:372px;top:244px;width:1541px;height:35px;background:#fff;border:1px solid #c8c8c8;"></div>
<svg class="a" style="left:1893px;top:257px;" width="14" height="11" viewBox="0 0 14 11"><path d="M1.500 2L6.800 7.500L12 2" fill="none" stroke="#777" stroke-width="3"/></svg>
<div class="a " style="left:0px;top:294px;width:1890px;height:29px;background:#e6e6e6;"></div>
<div class="a " style="left:40px;top:294px;width:120px;height:28px;background:#d2d2d2;"></div>
<div class="a " style="left:39px;top:294px;width:1px;height:28px;background:#b5b5b5;"></div>
<div class="a " style="left:159px;top:294px;width:1px;height:28px;background:#b5b5b5;"></div>
<div class="a " style="left:279px;top:294px;width:1px;height:28px;background:#b5b5b5;"></div>
<div class="a " style="left:399px;top:294px;width:1px;height:28px;background:#b5b5b5;"></div>
<div class="a " style="left:519px;top:294px;width:1px;height:28px;background:#b5b5b5;"></div>
<div class="a " style="left:639px;top:294px;width:1px;height:28px;background:#b5b5b5;"></div>
<div class="a " style="left:759px;top:294px;width:1px;height:28px;background:#b5b5b5;"></div>
<div class="a " style="left:879px;top:294px;width:1px;height:28px;background:#b5b5b5;"></div>
<div class="a " style="left:999px;top:294px;width:1px;height:28px;background:#b5b5b5;"></div>
<div class="a " style="left:1119px;top:294px;width:1px;height:28px;background:#b5b5b5;"></div>
<div class="a " style="left:1239px;top:294px;width:1px;height:28px;background:#b5b5b5;"></div>
<div class="a " style="left:1359px;top:294px;width:1px;height:28px;background:#b5b5b5;"></div>
<div class="a " style="left:1479px;top:294px;width:1px;height:28px;background:#b5b5b5;"></div>
<div class="a " style="left:1599px;top:294px;width:1px;height:28px;background:#b5b5b5;"></div>
<div class="a " style="left:1719px;top:294px;width:1px;height:28px;background:#b5b5b5;"></div>
<div class="a " style="left:1839px;top:294px;width:1px;height:28px;background:#b5b5b5;"></div>
<div class="a " style="left:0px;top:322px;width:1890px;height:1px;background:#9f9f9f;"></div>
<svg class="a" style="left:15px;top:299px;" width="21" height="20" viewBox="0 0 21 20"><path d="M21 0V20H0Z" fill="#b9b9b9"/></svg>
<div class="t" style="left:69.5px;width:60px;text-align:center;top:299px;height:24px;line-height:24px;font-size:19px;color:#217346;">A</div>
<div class="t" style="left:189.5px;width:60px;text-align:center;top:299px;height:24px;line-height:24px;font-size:19px;color:#1a1a1a;">B</div>
<div class="t" style="left:309.5px;width:60px;text-align:center;top:299px;height:24px;line-height:24px;font-size:19px;color:#1a1a1a;">C</div>
<div class="t" style="left:429.5px;width:60px;text-align:center;top:299px;height:24px;line-height:24px;font-size:19px;color:#1a1a1a;">D</div>
<div class="t" style="left:549.5px;width:60px;text-align:center;top:299px;height:24px;line-height:24px;font-size:19px;color:#1a1a1a;">E</div>
<div class="t" style="left:669.5px;width:60px;text-align:center;top:299px;height:24px;line-height:24px;font-size:19px;color:#1a1a1a;">F</div>
<div class="t" style="left:789.5px;width:60px;text-align:center;top:299px;height:24px;line-height:24px;font-size:19px;color:#1a1a1a;">G</div>
<div class="t" style="left:909.5px;width:60px;text-align:center;top:299px;height:24px;line-height:24px;font-size:19px;color:#1a1a1a;">H</div>
<div class="t" style="left:1029.5px;width:60px;text-align:center;top:299px;height:24px;line-height:24px;font-size:19px;color:#1a1a1a;">I</div>
<div class="t" style="left:1149.5px;width:60px;text-align:center;top:299px;height:24px;line-height:24px;font-size:19px;color:#1a1a1a;">J</div>
<div class="t" style="left:1269.5px;width:60px;text-align:center;top:299px;height:24px;line-height:24px;font-size:19px;color:#1a1a1a;">K</div>
<div class="t" style="left:1389.5px;width:60px;text-align:center;top:299px;height:24px;line-height:24px;font-size:19px;color:#1a1a1a;">L</div>
<div class="t" style="left:1509.5px;width:60px;text-align:center;top:299px;height:24px;line-height:24px;font-size:19px;color:#1a1a1a;">M</div>
<div class="t" style="left:1629.5px;width:60px;text-align:center;top:299px;height:24px;line-height:24px;font-size:19px;color:#1a1a1a;">N</div>
<div class="t" style="left:1749.5px;width:60px;text-align:center;top:299px;height:24px;line-height:24px;font-size:19px;color:#1a1a1a;">O</div>
<div class="a " style="left:40px;top:323px;width:1849px;height:630px;background-color:#fff;background-image:repeating-linear-gradient(to right,transparent 0,transparent 119px,#d4d4d4 119px,#d4d4d4 120px),repeating-linear-gradient(to bottom,transparent 0,transparent 28px,#d4d4d4 28px,#d4d4d4 29px);"></div>
<div class="a " style="left:0px;top:323px;width:39px;height:630px;background-color:#e6e6e6;background-image:repeating-linear-gradient(to bottom,transparent 0,transparent 28px,#b5b5b5 28px,#b5b5b5 29px);"></div>
<div class="a " style="left:0px;top:323px;width:39px;height:28px;background:#d2d2d2;"></div>
<div class="a " style="left:39px;top:323px;width:1px;height:630px;background:#b5b5b5;"></div>
<div class="t" style="left:0.700px;width:39px;text-align:center;top:326.5px;height:24px;line-height:24px;font-size:19px;color:#217346;">1</div>
<div class="t" style="left:0.700px;width:39px;text-align:center;top:355.5px;height:24px;line-height:24px;font-size:19px;color:#1a1a1a;">2</div>
<div class="t" style="left:0.700px;width:39px;text-align:center;top:384.5px;height:24px;line-height:24px;font-size:19px;color:#1a1a1a;">3</div>
<div class="t" style="left:0.700px;width:39px;text-align:center;top:413.5px;height:24px;line-height:24px;font-size:19px;color:#1a1a1a;">4</div>
<div class="t" style="left:0.700px;width:39px;text-align:center;top:442.5px;height:24px;line-height:24px;font-size:19px;color:#1a1a1a;">5</div>
<div class="t" style="left:0.700px;width:39px;text-align:center;top:471.5px;height:24px;line-height:24px;font-size:19px;color:#1a1a1a;">6</div>
<div class="t" style="left:0.700px;width:39px;text-align:center;top:500.5px;height:24px;line-height:24px;font-size:19px;color:#1a1a1a;">7</div>
<div class="t" style="left:0.700px;width:39px;text-align:center;top:529.5px;height:24px;line-height:24px;font-size:19px;color:#1a1a1a;">8</div>
<div class="t" style="left:0.700px;width:39px;text-align:center;top:558.5px;height:24px;line-height:24px;font-size:19px;color:#1a1a1a;">9</div>
<div class="t" style="left:0.700px;width:39px;text-align:center;top:587.5px;height:24px;line-height:24px;font-size:19px;color:#1a1a1a;">10</div>
<div class="t" style="left:0.700px;width:39px;text-align:center;top:616.5px;height:24px;line-height:24px;font-size:19px;color:#1a1a1a;">11</div>
<div class="t" style="left:0.700px;width:39px;text-align:center;top:645.5px;height:24px;line-height:24px;font-size:19px;color:#1a1a1a;">12</div>
<div class="t" style="left:0.700px;width:39px;text-align:center;top:674.5px;height:24px;line-height:24px;font-size:19px;color:#1a1a1a;">13</div>
<div class="t" style="left:0.700px;width:39px;text-align:center;top:703.5px;height:24px;line-height:24px;font-size:19px;color:#1a1a1a;">14</div>
<div class="t" style="left:0.700px;width:39px;text-align:center;top:732.5px;height:24px;line-height:24px;font-size:19px;color:#1a1a1a;">15</div>
<div class="t" style="left:0.700px;width:39px;text-align:center;top:761.5px;height:24px;line-height:24px;font-size:19px;color:#1a1a1a;">16</div>
<div class="t" style="left:0.700px;width:39px;text-align:center;top:790.5px;height:24px;line-height:24px;font-size:19px;color:#1a1a1a;">17</div>
<div class="t" style="left:0.700px;width:39px;text-align:center;top:819.5px;height:24px;line-height:24px;font-size:19px;color:#1a1a1a;">18</div>
<div class="t" style="left:0.700px;width:39px;text-align:center;top:848.5px;height:24px;line-height:24px;font-size:19px;color:#1a1a1a;">19</div>
<div class="t" style="left:0.700px;width:39px;text-align:center;top:877.5px;height:24px;line-height:24px;font-size:19px;color:#1a1a1a;">20</div>
<div class="t" style="left:0.700px;width:39px;text-align:center;top:906.5px;height:24px;line-height:24px;font-size:19px;color:#1a1a1a;">21</div>
<div class="t" style="left:0.700px;width:39px;text-align:center;top:935.5px;height:24px;line-height:24px;font-size:19px;color:#1a1a1a;">22</div>
<div class="a " style="left:1889px;top:323px;width:1px;height:631px;background:#ababab;"></div>
<div class="a " style="left:38px;top:321px;width:123px;height:32px;border:2px solid #217346;"></div>
<div class="a " style="left:155px;top:347px;width:7px;height:7px;background:#fff;"></div>
<div class="a " style="left:156px;top:348px;width:6px;height:6px;background:#217346;"></div>
<div class="a " style="left:1892px;top:295px;width:25px;height:25px;background:#fff;border:1px solid #d0d0d0;"></div>
<svg class="a" style="left:1899px;top:304px;" width="11" height="6" viewBox="0 0 11 6"><path d="M0 6L5.500 0L11 6Z" fill="#777"/></svg>
<div class="a " style="left:1892px;top:320px;width:25px;height:580px;background:#fff;border:1px solid #ababab;"></div>
<div class="a " style="left:1892px;top:900px;width:25px;height:30px;background:#dadada;"></div>
<div class="a " style="left:0px;top:953px;width:1920px;height:35px;background:#e6e6e6;"></div>
<div class="a " style="left:0px;top:953px;width:1890px;height:1px;background:#ababab;"></div>
<div class="a " style="left:0px;top:987px;width:1920px;height:1px;background:#c6c6c6;"></div>
<div class="a " style="left:0px;top:988px;width:1920px;height:31px;background:#f3f3f3;"></div>
<svg class="a" style="left:29px;top:964px;" width="7" height="11" viewBox="0 0 7 11"><path d="M7 0V11L0 5.500Z" fill="#c0c0c0"/></svg>
<svg class="a" style="left:64px;top:964px;" width="7" height="11" viewBox="0 0 7 11"><path d="M0 0V11L7 5.500Z" fill="#c0c0c0"/></svg>
<div class="a " style="left:118px;top:957px;width:1px;height:26px;background:#ababab;"></div>
<div class="t " style="left:134px;top:956.7px;height:24px;line-height:24px;font-size:18.5px;color:#444;letter-spacing:0.26px;">Tabelle1</div>
<div class="a " style="left:223px;top:953px;width:105px;height:31px;background:#fff;border-left:1px solid #ababab;border-right:1px solid #ababab;border-bottom:2px solid #217346;"></div>
<div class="t " style="left:235.5px;top:956.2px;height:24px;line-height:24px;font-size:20px;color:#217346;letter-spacing:0.18px;font-weight:bold;">Tabelle2</div>
<svg class="a" style="left:366px;top:958px;" width="24" height="24" viewBox="0 0 24 24"><circle cx="12" cy="12" r="10.500" fill="none" stroke="#8a8a8a" stroke-width="1.300"/><path d="M12 6.500V17.500M6.500 12H17.500" stroke="#8a8a8a" stroke-width="1.300"/></svg>
<div class="a " style="left:1148px;top:962px;width:3px;height:3px;background:#bcbcbc;"></div>
<div class="a " style="left:1148px;top:968px;width:3px;height:3px;background:#bcbcbc;"></div>
<div class="a " style="left:1148px;top:974px;width:3px;height:3px;background:#bcbcbc;"></div>
<div class="a " style="left:1168px;top:957px;width:25px;height:25px;background:#fff;border:1px solid #d0d0d0;"></div>
<svg class="a" style="left:1177px;top:964px;" width="7" height="11" viewBox="0 0 7 11"><path d="M7 0V11L0 5.500Z" fill="#777"/></svg>
<div class="a " style="left:1193px;top:957px;width:628px;height:25px;background:#fff;border:1px solid #ababab;"></div>
<div class="a " style="left:1821px;top:957px;width:45px;height:25px;background:#dadada;"></div>
<div class="a " style="left:1866px;top:957px;width:25px;height:25px;background:#fff;border:1px solid #d0d0d0;"></div>
<svg class="a" style="left:1876px;top:964px;" width="7" height="11" viewBox="0 0 7 11"><path d="M0 0V11L7 5.500Z" fill="#777"/></svg>
<div class="a " style="left:1892px;top:930px;width:25px;height:25px;background:#fff;border:1px solid #d0d0d0;"></div>
<svg class="a" style="left:1899px;top:940px;" width="11" height="6" viewBox="0 0 11 6"><path d="M0 0H11L5.500 6Z" fill="#777"/></svg>
<div class="t " style="left:7.5px;top:992.2px;height:24px;line-height:24px;font-size:15px;color:#444;letter-spacing:0.14px;">Bereit</div>
<div class="a " style="left:1532px;top:988px;width:44px;height:31px;background:#c6c6c6;"></div>
<svg class="a" style="left:1544px;top:993px;" width="21" height="21" viewBox="0 0 21 21"><path d="M0.5 0.5H19.500V19.500H0.5ZM0.5 6.500H19.500M0.5 13.500H19.500M6.500 0.5V19.500M13.500 0.5V19.500" fill="none" stroke="#666"/></svg>
<svg class="a" style="left:1589px;top:993px;" width="21" height="21" viewBox="0 0 21 21"><path d="M0.5 0.5H19.500V19.500H0.5Z" fill="none" stroke="#666"/><path d="M4.500 4.500H15.500V16.500H4.500ZM7 7.500H13M7 10.500H13M7 13.500H13" fill="none" stroke="#666"/></svg>
<svg class="a" style="left:1634px;top:994px;" width="21" height="21" viewBox="0 0 21 21"><path d="M0.5 0.5H19.500V17.500H0.5Z" fill="none" stroke="#666"/><path d="M0.5 8.500H10.500V0.5M6 0.5V8.500" fill="none" stroke="#666"/></svg>
<div class="a " style="left:1672px;top:1002px;width:12px;height:2px;background:#666;"></div>
<div class="a " style="left:1690px;top:1002px;width:148px;height:2px;background:#9a9a9a;"></div>
<div class="a " style="left:1761px;top:994px;width:6px;height:18px;background:#666;"></div>
<div class="a " style="left:1844px;top:1002px;width:12px;height:2px;background:#666;"></div>
<div class="a " style="left:1849px;top:997px;width:2px;height:12px;background:#666;"></div>
<div class="t " style="left:1869px;top:992.2px;height:24px;line-height:24px;font-size:15px;color:#444;letter-spacing:0.29px;">100 %</div>
<div class="a " style="left:317px;top:600px;width:303px;height:369px;background:#fff;border:1px solid #c6c6c6;box-shadow:2px 2px 5px rgba(0,0,0,.28);"></div>
<div class="a " style="left:319px;top:674px;width:299px;height:36px;background:#c6c6c6;"></div>
<div class="t " style="left:360.7px;top:608.7px;height:24px;line-height:24px;font-size:17.5px;color:#4a4a4a;letter-spacing:-0.26px;">E<u>i</u>nfügen...</div>
<div class="t " style="left:360.7px;top:644.7px;height:24px;line-height:24px;font-size:17.5px;color:#4a4a4a;letter-spacing:-0.48px;"><u>L</u>öschen</div>
<div class="t " style="left:360.7px;top:680.7px;height:24px;line-height:24px;font-size:17.5px;color:#333;letter-spacing:0.02px;"><u>U</u>mbenennen</div>
<div class="t " style="left:360.7px;top:716.7px;height:24px;line-height:24px;font-size:17.5px;color:#4a4a4a;"><u>V</u>erschieben oder kopieren...</div>
<div class="t " style="left:360.7px;top:752.7px;height:24px;line-height:24px;font-size:17.5px;color:#4a4a4a;letter-spacing:-0.11px;">Co<u>d</u>e anzeigen</div>
<div class="t " style="left:360.7px;top:788.7px;height:24px;line-height:24px;font-size:17.5px;color:#4a4a4a;letter-spacing:-0.22px;">Blatt schüt<u>z</u>en...</div>
<div class="t " style="left:360.7px;top:824.7px;height:24px;line-height:24px;font-size:17.5px;color:#4a4a4a;letter-spacing:-0.02px;"><u>R</u>egisterfarbe</div>
<div class="t " style="left:360.7px;top:863.7px;height:24px;line-height:24px;font-size:17.5px;color:#4a4a4a;letter-spacing:0.09px;">Ausble<u>n</u>den</div>
<div class="t " style="left:360.7px;top:899.7px;height:24px;line-height:24px;font-size:17.5px;color:#b3b3b3;letter-spacing:-0.30px;"><u>E</u>inblenden...</div>
<div class="t " style="left:360.7px;top:938.7px;height:24px;line-height:24px;font-size:17.5px;color:#4a4a4a;letter-spacing:-0.11px;"><u>A</u>lle Blätter auswählen</div>
<div class="a " style="left:364px;top:854px;width:254px;height:1px;background:#e1e1e1;"></div>
<div class="a " style="left:364px;top:929px;width:254px;height:1px;background:#e1e1e1;"></div>
<svg class="a" style="left:598px;top:830px;" width="7" height="12" viewBox="0 0 7 12"><path d="M0 0V12L7 6Z" fill="#666"/></svg>
<svg class="a" style="left:325px;top:646px;" width="24" height="22" viewBox="0 0 24 22"><path d="M0.5 0.5H21.500V17.500H0.5ZM0.5 4.500H21.500M0.5 9.500H21.500M0.5 14.500H21.500M5.500 0.5V17.500M10.500 0.5V14.500M16.500 0.5V14.500" fill="none" stroke="#777"/><rect x="0" y="0" width="22" height="1.500" fill="#777"/><path d="M12 12L22 22M22 12L12 22" stroke="#d9593a" stroke-width="1.800"/></svg>
<svg class="a" style="left:324px;top:754px;" width="25" height="23" viewBox="0 0 25 23"><path d="M1.500 8V0.500H22.500V18.500H15" fill="none" stroke="#777"/><rect x="1" y="0" width="22" height="3.500" fill="#6e6e6e"/><path d="M11 6.500H20M13 9.500H20M14 12.500H20M14 15.500H20" stroke="#9a9a9a"/><circle cx="6.200" cy="13" r="4.600" fill="#fff" stroke="#777" stroke-width="1.500"/><path d="M9.800 16.500L14 20.800" stroke="#777" stroke-width="2.200" stroke-linecap="round"/></svg>
<svg class="a" style="left:325px;top:789px;" width="24" height="24" viewBox="0 0 24 24"><path d="M0.5 0.5H21.500V18.500H0.5ZM0.5 4.500H21.500M0.5 9.500H21.500M0.5 14.500H21.500M5.500 0.5V18.500M10.500 0.5V18.500M16.500 0.5V18.500" fill="none" stroke="#777"/><rect x="0" y="0" width="22" height="1.500" fill="#777"/><rect x="12" y="13" width="11" height="10" rx="1.500" fill="#edc57d"/><path d="M14.500 13V11A3 3 0 0 1 20.500 11V13" fill="none" stroke="#edc57d" stroke-width="1.600"/><rect x="16.800" y="16" width="1.500" height="4" fill="#fff"/></svg>
<div class="a " style="left:288px;top:657px;width:352px;height:68px;border:5px solid #ec1c24;"></div>
<div class="a " style="left:210px;top:938px;width:140px;height:58px;border:5px solid #ec1c24;"></div>
</div></body></html>
